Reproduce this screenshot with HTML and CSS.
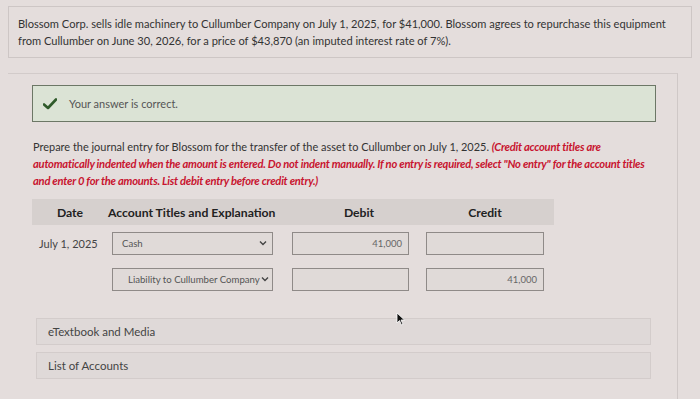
FILE: index.html
```html
<!DOCTYPE html>
<html>
<head>
<meta charset="utf-8">
<link rel="stylesheet" href="styles.css">
</head>
<body>
<div class="question">
  Blossom Corp. sells idle machinery to Cullumber Company on July 1, 2025, for $41,000. Blossom agrees to repurchase this equipment from Cullumber on June 30, 2026, for a price of $43,870 (an imputed interest rate of 7%).
</div>
<div class="panel">
  <div class="correct">
    <svg class="check" width="14" height="12" viewBox="0 0 14 12"><path d="M1 6.5 L5 10 L13 1.5" fill="none" stroke="#2f5a2a" stroke-width="2.6" stroke-linecap="round" stroke-linejoin="round"/></svg>
    <span>Your answer is correct.</span>
  </div>
  <p class="instr">Prepare the journal entry for Blossom for the transfer of the asset to Cullumber on July 1, 2025. <em>(Credit account titles are automatically indented when the amount is entered. Do not indent manually. If no entry is required, select "No entry" for the account titles and enter 0 for the amounts. List debit entry before credit entry.)</em></p>
  <div class="table">
    <div class="thead">
      <div class="c-date">Date</div>
      <div class="c-acct">Account Titles and Explanation</div>
      <div class="c-debit">Debit</div>
      <div class="c-credit">Credit</div>
    </div>
    <div class="row">
      <div class="c-date date">July 1, 2025</div>
      <div class="c-acct"><div class="select"><span>Cash</span><svg width="8" height="6" viewBox="0 0 8 6"><path d="M1 1.5 L4 4.5 L7 1.5" fill="none" stroke="#444" stroke-width="1.4"/></svg></div></div>
      <div class="c-debit"><div class="input">41,000</div></div>
      <div class="c-credit"><div class="input"></div></div>
    </div>
    <div class="row">
      <div class="c-date date"></div>
      <div class="c-acct"><div class="select indent"><span>Liability to Cullumber Company</span><svg width="8" height="6" viewBox="0 0 8 6"><path d="M1 1.5 L4 4.5 L7 1.5" fill="none" stroke="#444" stroke-width="1.4"/></svg></div></div>
      <div class="c-debit"><div class="input"></div></div>
      <div class="c-credit"><div class="input">41,000</div></div>
    </div>
  </div>
  <div class="links">
    <div class="link">eTextbook and Media</div>
    <div class="link">List of Accounts</div>
  </div>
  <svg class="cursor" width="10" height="14" viewBox="0 0 10 14"><path d="M1 1 L1 11 L3.5 8.5 L5.5 13 L7 12.3 L5 8 L8.5 8 Z" fill="#111" stroke="#fff" stroke-width="0.8"/></svg>
</div>
</body>
</html>
```
FILE: styles.css
```css
* { box-sizing: border-box; }
html, body { margin: 0; padding: 0; }
body {
  width: 700px;
  height: 399px;
  overflow: hidden;
  background: #e4dddc;
  font-family: Lato, "Open Sans", sans-serif;
  color: #333;
  position: relative;
}
.question {
  margin: 6px 8px 0 8px;
  border: 1px solid #cdc6c5;
  padding: 8px 10px 6px 9px;
  font-size: 11.1px;
  line-height: 17px;
  color: #333;
  height: 52px;
}
.panel {
  position: relative;
  margin: 15px 22px 0 8px;
  border-top: 1px solid #d2cbca;
  border-right: 1px solid #cfc8c7;
  padding: 11px 0 0 24px;
  height: 330px;
}
.correct {
  width: 624px;
  height: 37px;
  border: 1px solid #6c7766;
  background: #dbe3d5;
  display: flex;
  align-items: center;
  padding-left: 10px;
  gap: 12px;
  font-size: 11px;
  color: #555;
}
.check { flex: none; }
.instr {
  margin: 16px 0 0 1px;
  width: 630px;
  font-size: 10.95px;
  line-height: 17px;
  color: #333;
}
.instr em {
  color: #c8142f;
  font-weight: bold;
  font-style: italic;
  font-size: 11.2px;
  line-height: 17px;
  letter-spacing: -0.25px;
}
.table { margin-top: 10px; width: 522px; }
.thead {
  display: flex;
  align-items: center;
  height: 26px;
  background: #d6d0ce;
  font-weight: bold;
  font-size: 12.2px;
  color: #222;
}
.c-date { width: 76px; text-align: center; flex: none; }
.c-acct { width: 184px; flex: none; padding-left: 4px; }
.thead .c-acct { text-align: left; padding-left: 0; }
.c-debit { width: 134px; flex: none; padding-left: 0; }
.thead .c-debit { text-align: center; padding-left: 0; padding-right: 0; }
.c-credit { width: 128px; flex: none; padding-left: 0; }
.thead .c-credit { text-align: center; padding-left: 0; padding-right: 10px; }
.row {
  display: flex;
  align-items: center;
  margin-top: 7px;
  height: 22px;
}
.row + .row { margin-top: 14px; }
.date { font-size: 11px; color: #444; text-align: left; padding-left: 7px; }
.select {
  width: 161px;
  height: 23px;
  border: 1px solid #8f8a88;
  background: #e0dad8;
  display: flex;
  align-items: center;
  justify-content: space-between;
  padding: 0 5px 0 9px;
  font-size: 9.6px;
  color: #555;
  white-space: nowrap;
}
.select span { flex: none; }
.select svg { flex: none; }
.select.indent { padding: 0 3px 0 15px; }
.input {
  width: 117px;
  height: 23px;
  border: 1px solid #8f8a88;
  background: #e0dad8;
  display: flex;
  align-items: center;
  justify-content: flex-end;
  padding-right: 6px;
  font-size: 9.5px;
  color: #666;
}
.c-credit .input { width: 118px; }
.links {
  margin-top: 28px;
  width: 615px;
  margin-left: 4px;
  display: flex;
  flex-direction: column;
  gap: 7px;
}
.link {
  height: 27px;
  border: 1px solid #d3cccb;
  background: #dfd9d8;
  display: flex;
  align-items: center;
  padding-left: 11px;
  font-size: 11.5px;
  color: #444;
}
.cursor { position: absolute; left: 388px; top: 238px; }
```
